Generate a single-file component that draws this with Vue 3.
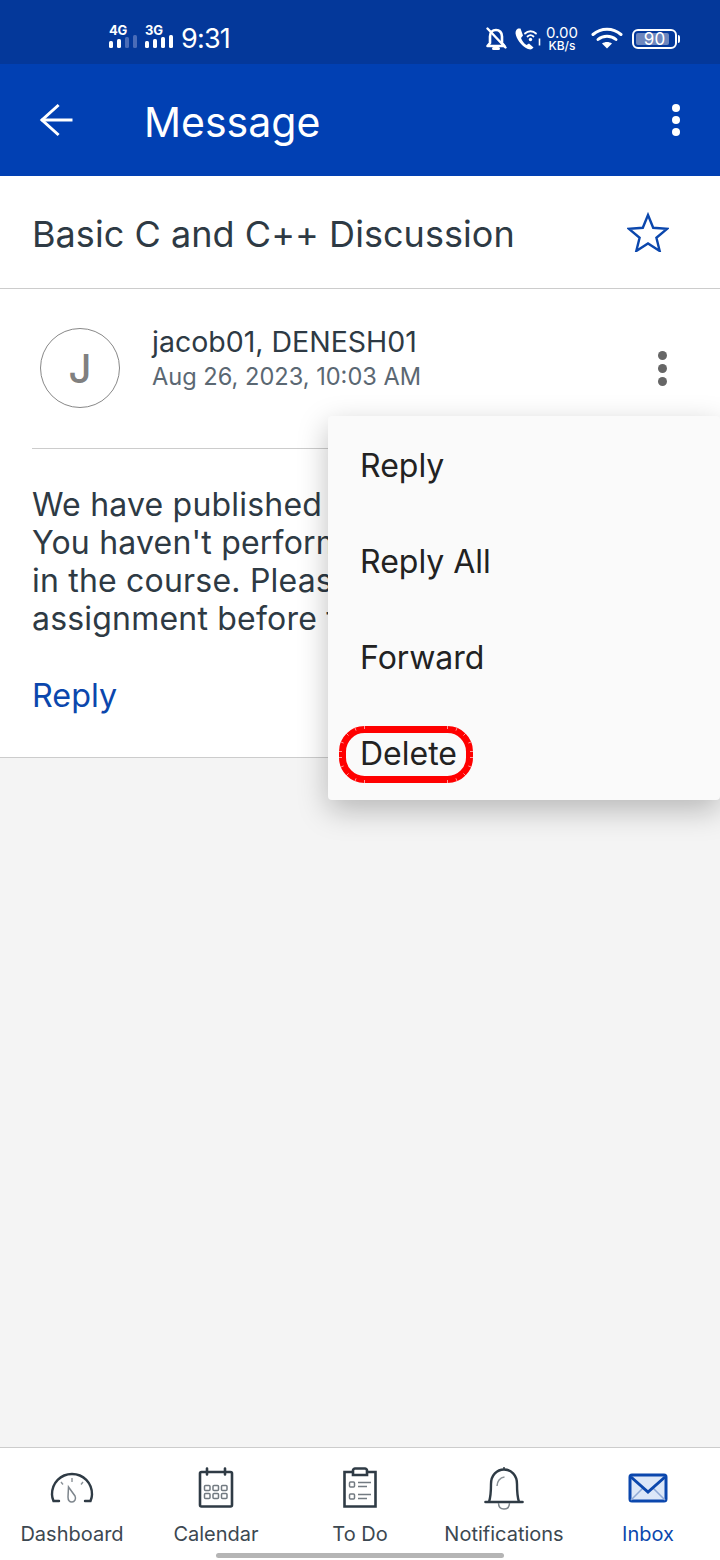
<script setup>
const lines = [
  "We have published an assignment.",
  "You haven't performed any activity",
  "in the course. Please complete the",
  "assignment before the due date."
]
const menu = ["Reply", "Reply All", "Forward", "Delete"]

// small notches along the outer edge of the hand-drawn red ring
const R = 22
const corners = [
  { cx: 25.5, cy: 25.5, sx: -1, sy: -1 },
  { cx: 108.5, cy: 25.5, sx: 1, sy: -1 },
  { cx: 25.5, cy: 31.5, sx: -1, sy: 1 },
  { cx: 108.5, cy: 31.5, sx: 1, sy: 1 }
]
const ticks = corners.flatMap((c) =>
  [0, 22, 45, 68, 90].map((deg) => {
    const a = (deg * Math.PI) / 180
    const ux = Math.cos(a) * c.sx
    const uy = Math.sin(a) * c.sy
    return {
      x1: c.cx + ux * (R + 0.5),
      y1: c.cy + uy * (R + 0.5),
      x2: c.cx + ux * (R + 4),
      y2: c.cy + uy * (R + 4)
    }
  })
)
</script>

<template>
  <div class="page">
    <div class="status">
      <div class="sig">
        <span class="net">4G</span>
        <div class="bars"><i class="b1"></i><i class="b2"></i><i class="b3 dim"></i><i class="b4 dim"></i></div>
      </div>
      <div class="sig second">
        <span class="net">3G</span>
        <div class="bars"><i class="b1"></i><i class="b2"></i><i class="b3"></i><i class="b4"></i></div>
      </div>
      <span class="time">9:31</span>
      <div class="spacer"></div>
      <svg class="s-bell" width="22" height="24" viewBox="0 0 22 24" fill="none" stroke="#fff" stroke-width="2.6" stroke-linecap="round" stroke-linejoin="round">
        <path d="M5 16V9.5C5 5.5 7.5 3 11 3s6 2.500 6 6.500V16l2.500 3H2.500z"/>
        <path d="M8.500 21.500h5" stroke-width="3"/>
        <path d="M2.500 1.500l18 19" stroke-width="2.400"/>
      </svg>
      <svg class="s-call" width="29" height="24" viewBox="0 0 29 24" fill="none">
        <path d="M4 1.500c-2.500 1.500-3 4-2 7 2 6 6.500 11 12 13.500 2.500 1 4 .5 5.500-1.500l-4.500-4-2.500 1.500c-2.500-1.500-4.500-4.500-5.500-7L9 8.500 6.500 1.500z" fill="#fff"/>
        <path d="M11 6.500c3-3 8-3 11 0M13.500 9.500c1.700-1.500 4.300-1.500 6 0" stroke="#fff" stroke-width="1.800" stroke-linecap="round"/>
        <circle cx="16.500" cy="12.500" r="1.700" fill="#fff"/>
        <path d="M25.500 11.500v7" stroke="#fff" stroke-width="1.600"/>
      </svg>
      <div class="speed"><span class="sp1">0.00</span><span class="sp2">KB/s</span></div>
      <svg class="s-wifi" width="32" height="24" viewBox="0 0 32 24" fill="none" stroke="#fff" stroke-width="3" stroke-linecap="round">
        <path d="M2 7.500c8-7 20-7 28 0"/>
        <path d="M7 12.500c5-4.500 13-4.500 18 0"/>
        <path d="M16 21.500l-5-5c3-2 7-2 10 0z" fill="#fff" stroke="none"/>
      </svg>
      <div class="battery">
        <div class="cell"><div class="fill"></div><span>90</span></div>
        <div class="tip"></div>
      </div>
    </div>

    <header class="appbar">
      <svg class="back" width="36" height="36" viewBox="0 0 36 36" fill="none" stroke="#fff" stroke-width="3" stroke-linecap="square">
        <path d="M5 18h28"/>
        <path d="M19.500 4L4 18l15.500 14"/>
      </svg>
      <h1 class="title">Message</h1>
      <div class="dots white"><i></i><i></i><i></i></div>
    </header>

    <section class="subject">
      <h2>Basic C and C++ Discussion</h2>
      <svg class="star" width="42" height="40" viewBox="0 0 42 40" fill="none" stroke="#0b47ad" stroke-width="2.400" stroke-linejoin="miter">
        <path d="M21 3l5.200 12.800 13.800 1-10.600 9 3.300 13.200L21 31.500l-11.700 7.500 3.300-13.200-10.600-9 13.800-1z"/>
      </svg>
    </section>

    <section class="message">
      <div class="sender">
        <div class="avatar">J</div>
        <div class="meta">
          <div class="names">jacob01, DENESH01</div>
          <div class="date">Aug 26, 2023, 10:03 AM</div>
        </div>
        <div class="dots gray"><i></i><i></i><i></i></div>
      </div>
      <div class="rule"></div>
      <div class="body">
        <div v-for="l in lines" :key="l" class="line">{{ l }}</div>
      </div>
      <div class="reply">Reply</div>
    </section>

    <main class="empty"></main>

    <nav class="nav">
      <div class="tab">
        <div class="ico">
          <svg width="44" height="34" viewBox="0 0 44 34" fill="none">
            <path d="M9 30H3.500C2.500 27.500 2 25.500 2 23.500 2 12 10.500 3 22 3s20 9 20 20.500c0 2-.5 4-1.500 6.500H35" stroke="#2f3b45" stroke-width="2.400" stroke-linecap="round"/>
            <path d="M22 7v4M11 11l2 2.500M33 11l-2 2.500" stroke="#8b9298" stroke-width="1.400"/>
            <path d="M18.500 16l6.500 9c1.500 3-.5 6-3 6s-4-2-4-5z" stroke="#7d858c" stroke-width="1.500"/>
          </svg>
        </div>
        <span>Dashboard</span>
      </div>
      <div class="tab">
        <div class="ico">
          <svg width="36" height="42" viewBox="0 0 36 42" fill="none">
            <rect x="2" y="5" width="32" height="34.500" rx="1.500" stroke="#2f3b45" stroke-width="2.600"/>
            <path d="M9 1.500v6M27 1.500v6" stroke="#2f3b45" stroke-width="2.600" stroke-linecap="round"/>
            <g stroke="#727a81" stroke-width="1.500">
              <rect x="6.500" y="18.500" width="5.500" height="5" rx="1"/>
              <rect x="15" y="18.500" width="5.500" height="5" rx="1"/>
              <rect x="23.500" y="18.500" width="5.500" height="5" rx="1"/>
              <rect x="6.500" y="26.500" width="5.500" height="5" rx="1"/>
              <rect x="15" y="26.500" width="5.500" height="5" rx="1"/>
              <rect x="23.500" y="26.500" width="5.500" height="5" rx="1"/>
            </g>
          </svg>
        </div>
        <span>Calendar</span>
      </div>
      <div class="tab">
        <div class="ico">
          <svg width="36" height="42" viewBox="0 0 36 42" fill="none">
            <path d="M11 5H2.500v34.500h31V5H25" stroke="#2f3b45" stroke-width="2.600"/>
            <path d="M11 8V3.500C11 2.500 12 1.500 13 1.500h10c1 0 2 1 2 2V8z" stroke="#2f3b45" stroke-width="2.600"/>
            <g stroke="#727a81" stroke-width="1.500">
              <rect x="7.500" y="15" width="5" height="5" rx="1"/>
              <rect x="7.500" y="27" width="5" height="5" rx="1"/>
              <path d="M16 15.500h13M16 19.500h9M16 27.500h13M16 31.500h9"/>
            </g>
          </svg>
        </div>
        <span>To Do</span>
      </div>
      <div class="tab">
        <div class="ico">
          <svg width="40" height="44" viewBox="0 0 40 44" fill="none">
            <path d="M20 1v3" stroke="#2f3b45" stroke-width="1.500"/>
            <path d="M1.500 36h37" stroke="#2f3b45" stroke-width="2.600" stroke-linecap="round"/>
            <path d="M5 36c1.300-4 2-8 2-18C7 9 13 3.500 20 3.500S33 9 33 18c0 10 .7 14 2 18" stroke="#2f3b45" stroke-width="2.400"/>
            <path d="M13 20c0-4.500 3-8.500 7.500-9" stroke="#8b9298" stroke-width="1.500"/>
            <path d="M14.500 37c0 4 2.500 6 5.500 6s5.500-2 5.500-6" stroke="#7d858c" stroke-width="1.500"/>
          </svg>
        </div>
        <span>Notifications</span>
      </div>
      <div class="tab active">
        <div class="ico">
          <svg width="40" height="30" viewBox="0 0 40 30" fill="none">
            <rect x="2" y="2" width="36" height="26" rx="2" fill="#dce7f8" stroke="#0b47ad" stroke-width="3"/>
            <path d="M3 27l12-12M37 27L25 15" stroke="#8fa9d6" stroke-width="1.500"/>
            <path d="M3 4l17 15L37 4" stroke="#0b47ad" stroke-width="3"/>
          </svg>
        </div>
        <span>Inbox</span>
      </div>
      <div class="home"></div>
    </nav>

    <div class="menu">
      <div v-for="m in menu" :key="m" class="item">
        <span class="label">
          {{ m }}
          <svg v-if="m === 'Delete'" class="ring" width="134" height="57" viewBox="0 0 134 57" fill="none">
            <rect x="3.500" y="3.500" width="127" height="50" rx="22" stroke="#f00" stroke-width="7"/>
            <line v-for="(t, i) in ticks" :key="i" :x1="t.x1" :y1="t.y1" :x2="t.x2" :y2="t.y2" stroke="#fff" stroke-width=".8" stroke-opacity=".75"/>
          </svg>
        </span>
      </div>
    </div>
  </div>
</template>

<style scoped>
.page {
  position: relative;
  width: 720px;
  height: 1560px;
  display: flex;
  flex-direction: column;
  background: #f4f4f4;
  font-family: Inter, "Liberation Sans", sans-serif;
  overflow: hidden;
}
.status {
  height: 64px;
  flex: none;
  display: flex;
  align-items: center;
  padding: 13px 40px 0 109px;
  box-sizing: border-box;
  background: #04389a;
  color: #fff;
}
.sig { display: flex; flex-direction: column; width: 28px; margin-bottom: 4px; }
.second { margin-left: 8px; }
.net { font-size: 13px; font-weight: 700; line-height: 10px; height: 10px; letter-spacing: -.2px; }
.bars { display: flex; align-items: flex-end; gap: 4px; height: 13px; }
.bars i { width: 4px; border-radius: 1.500px; background: #fff; display: block; }
.b1 { height: 7px; }
.b2 { height: 9px; }
.b3 { height: 11px; }
.b4 { height: 13px; }
.bars i.dim { background: #4a6cb8; }
.time { font-size: 27px; line-height: 30px; margin-left: 8px; letter-spacing: -.8px; }
.spacer { flex: 1; }
.s-bell { margin-right: 7px; }
.s-call { margin-right: 3px; }
.speed { display: flex; flex-direction: column; align-items: center; width: 32px; margin-right: 13px; }
.sp1 { font-size: 15px; line-height: 13px; margin-bottom: 1px; }
.sp2 { font-size: 12px; line-height: 12px; font-weight: 500; }
.s-wifi { margin-right: 9px; }
.battery { display: flex; align-items: center; }
.cell {
  position: relative;
  width: 41px;
  height: 16px;
  border: 2px solid #fff;
  border-radius: 6px;
  box-sizing: content-box;
  overflow: hidden;
  display: flex;
  align-items: center;
  justify-content: center;
}
.fill { position: absolute; left: 2px; top: 2px; bottom: 2px; width: 33px; background: #6d86bd; border-radius: 2px; }
.cell span { position: relative; font-size: 17px; line-height: 16px; }
.tip { width: 2px; height: 8px; background: #fff; border-radius: 0 2px 2px 0; margin-left: 1px; }

.appbar {
  height: 112px;
  flex: none;
  display: flex;
  align-items: center;
  padding: 0 40px 0 38px;
  box-sizing: border-box;
  background: #0140b3;
  color: #fff;
}
.back { flex: none; }
.title { margin: 4px 0 0 70px; flex: 1; font-size: 41px; line-height: 48px; font-weight: 400; }
.dots { display: flex; flex-direction: column; gap: 4px; }
.dots i { width: 8px; height: 8px; border-radius: 50%; display: block; }
.white i { background: #fff; }
.gray i { width: 9px; height: 9px; background: #666; }

.subject {
  height: 113px;
  flex: none;
  display: flex;
  align-items: center;
  justify-content: space-between;
  padding: 0 51px 0 32px;
  box-sizing: border-box;
  background: #fff;
  border-bottom: 1px solid #ccc;
}
.subject h2 { margin: 4px 0 0; font-size: 36px; line-height: 44px; font-weight: 400; color: #2e3a44; letter-spacing: .05px; }

.message {
  height: 469px;
  flex: none;
  box-sizing: border-box;
  background: #fff;
  border-bottom: 1px solid #ccc;
  display: flex;
  flex-direction: column;
}
.sender {
  display: flex;
  align-items: center;
  height: 159px;
  flex: none;
  padding: 0 53px 0 40px;
  box-sizing: border-box;
}
.avatar {
  width: 80px;
  height: 80px;
  margin-top: -1px;
  box-sizing: border-box;
  border: 1px solid #888;
  border-radius: 50%;
  display: flex;
  align-items: center;
  justify-content: center;
  font-size: 40px;
  font-weight: 500;
  color: #808080;
  flex: none;
}
.meta { flex: 1; margin-left: 32px; margin-top: -21px; }
.names { font-size: 28.500px; line-height: 36px; color: #2e3a44; }
.date { font-size: 23.600px; line-height: 32px; margin-top: 1px; color: #5b6873; }
.rule { height: 1px; background: #ccc; margin: 0 32px; flex: none; }
.body { width: 296px; overflow: hidden; padding: 37px 0 0 32px; font-size: 32px; line-height: 38px; color: #2e3a44; letter-spacing: .2px; }
.line { white-space: nowrap; }
.reply { margin: 39px 0 0 32px; font-size: 32.300px; line-height: 38px; color: #0b47ad; }
.empty { flex: 1; background: #f4f4f4; }

.nav {
  position: relative;
  height: 113px;
  flex: none;
  display: grid;
  grid-template-columns: repeat(5, 1fr);
  box-sizing: border-box;
  background: #fff;
  border-top: 1px solid #ccc;
}
.tab {
  display: flex;
  flex-direction: column;
  align-items: center;
  padding-top: 7px;
  height: 112px;
  box-sizing: border-box;
  color: #3c4851;
  font-size: 20px;
  line-height: 26px;
  white-space: nowrap;
}
.ico { height: 66px; display: flex; align-items: center; justify-content: center; }
.tab.active { color: #0b47ad; }
.home {
  position: absolute;
  left: 216px;
  bottom: 2px;
  width: 288px;
  height: 5px;
  border-radius: 3px;
  background: #b5b5b5;
}
.menu {
  position: absolute;
  top: 416px;
  right: 0;
  width: 392px;
  background: #fafafa;
  border-radius: 4px;
  box-shadow: 0 10px 30px rgba(0,0,0,.25);
}
.item {
  height: 96px;
  display: flex;
  align-items: center;
  padding: 4px 0 0 32px;
  box-sizing: border-box;
  font-size: 32px;
  line-height: 38px;
  color: #222;
}
.label { position: relative; }
.ring { position: absolute; left: -21px; top: -9px; }
</style>

<style>
html, body { margin: 0; padding: 0; background: #fff; }
</style>
